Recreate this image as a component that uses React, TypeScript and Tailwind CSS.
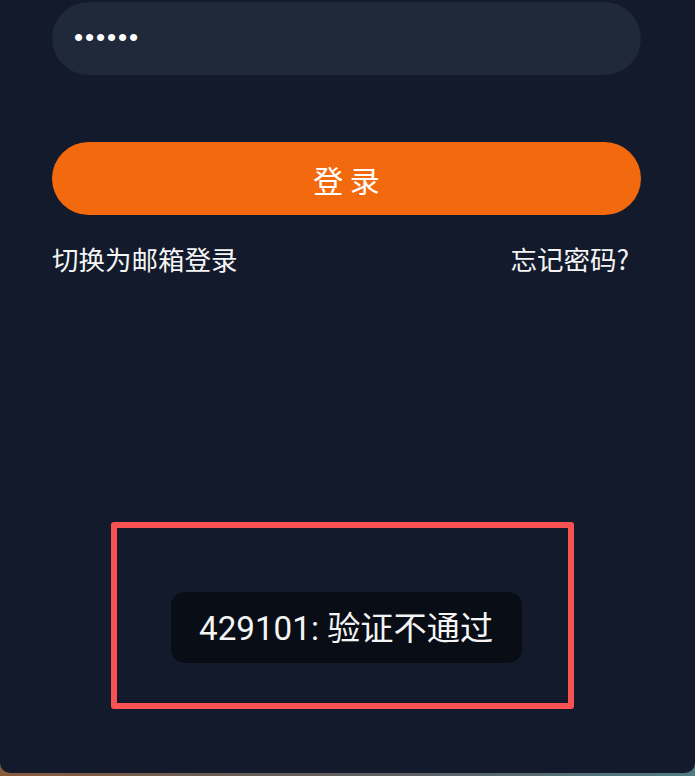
export default function App() {
  return (
    <div
      className="relative h-[776px] w-full overflow-hidden bg-[linear-gradient(90deg,#8a5a3c_0%,#6b5e55_30%,#5d6166_60%,#4e7a82_100%)]"
      style={{ fontFamily: '"Noto Sans CJK SC", "Noto Sans", sans-serif' }}
    >
      <div className="flex h-[773px] flex-col rounded-b-[10px] bg-[#121a2c] px-[52px] pt-[2px] pr-[54px]">
        <div className="flex h-[73px] items-center rounded-full bg-[#1f2939] pl-[22px]">
          <span
            className="-mt-[4px] text-[26px] leading-none tracking-[1.9px] text-white"
            style={{ fontFamily: '"Liberation Sans", sans-serif' }}
          >
            ••••••
          </span>
        </div>
        <button className="mt-[67px] flex h-[73px] items-center justify-center rounded-full bg-[#f2690e] text-[30px] leading-none text-white">
          登 录
        </button>
        <div className="mt-[29px] flex items-center justify-between text-[26.5px] leading-[30px] text-[#f5f5f5]">
          <span>切换为邮箱登录</span>
          <span className="pr-[12px]">忘记密码?</span>
        </div>
      </div>

      <div className="absolute left-[171px] top-[592px] flex h-[71px] items-center rounded-[14px] bg-[#090d15] pl-[28px] pr-[29px]">
        <span className="text-[33.2px] leading-none text-[#f5f5f5]">
          <span style={{ fontFamily: 'Roboto, "Noto Sans CJK SC", sans-serif' }}>429101: </span>
          验证不通过
        </span>
      </div>

      <div className="pointer-events-none absolute left-[111px] top-[522px] h-[187px] w-[463px] rounded-[3px] border-[6px] border-[#f85252]" />
    </div>
  );
}
